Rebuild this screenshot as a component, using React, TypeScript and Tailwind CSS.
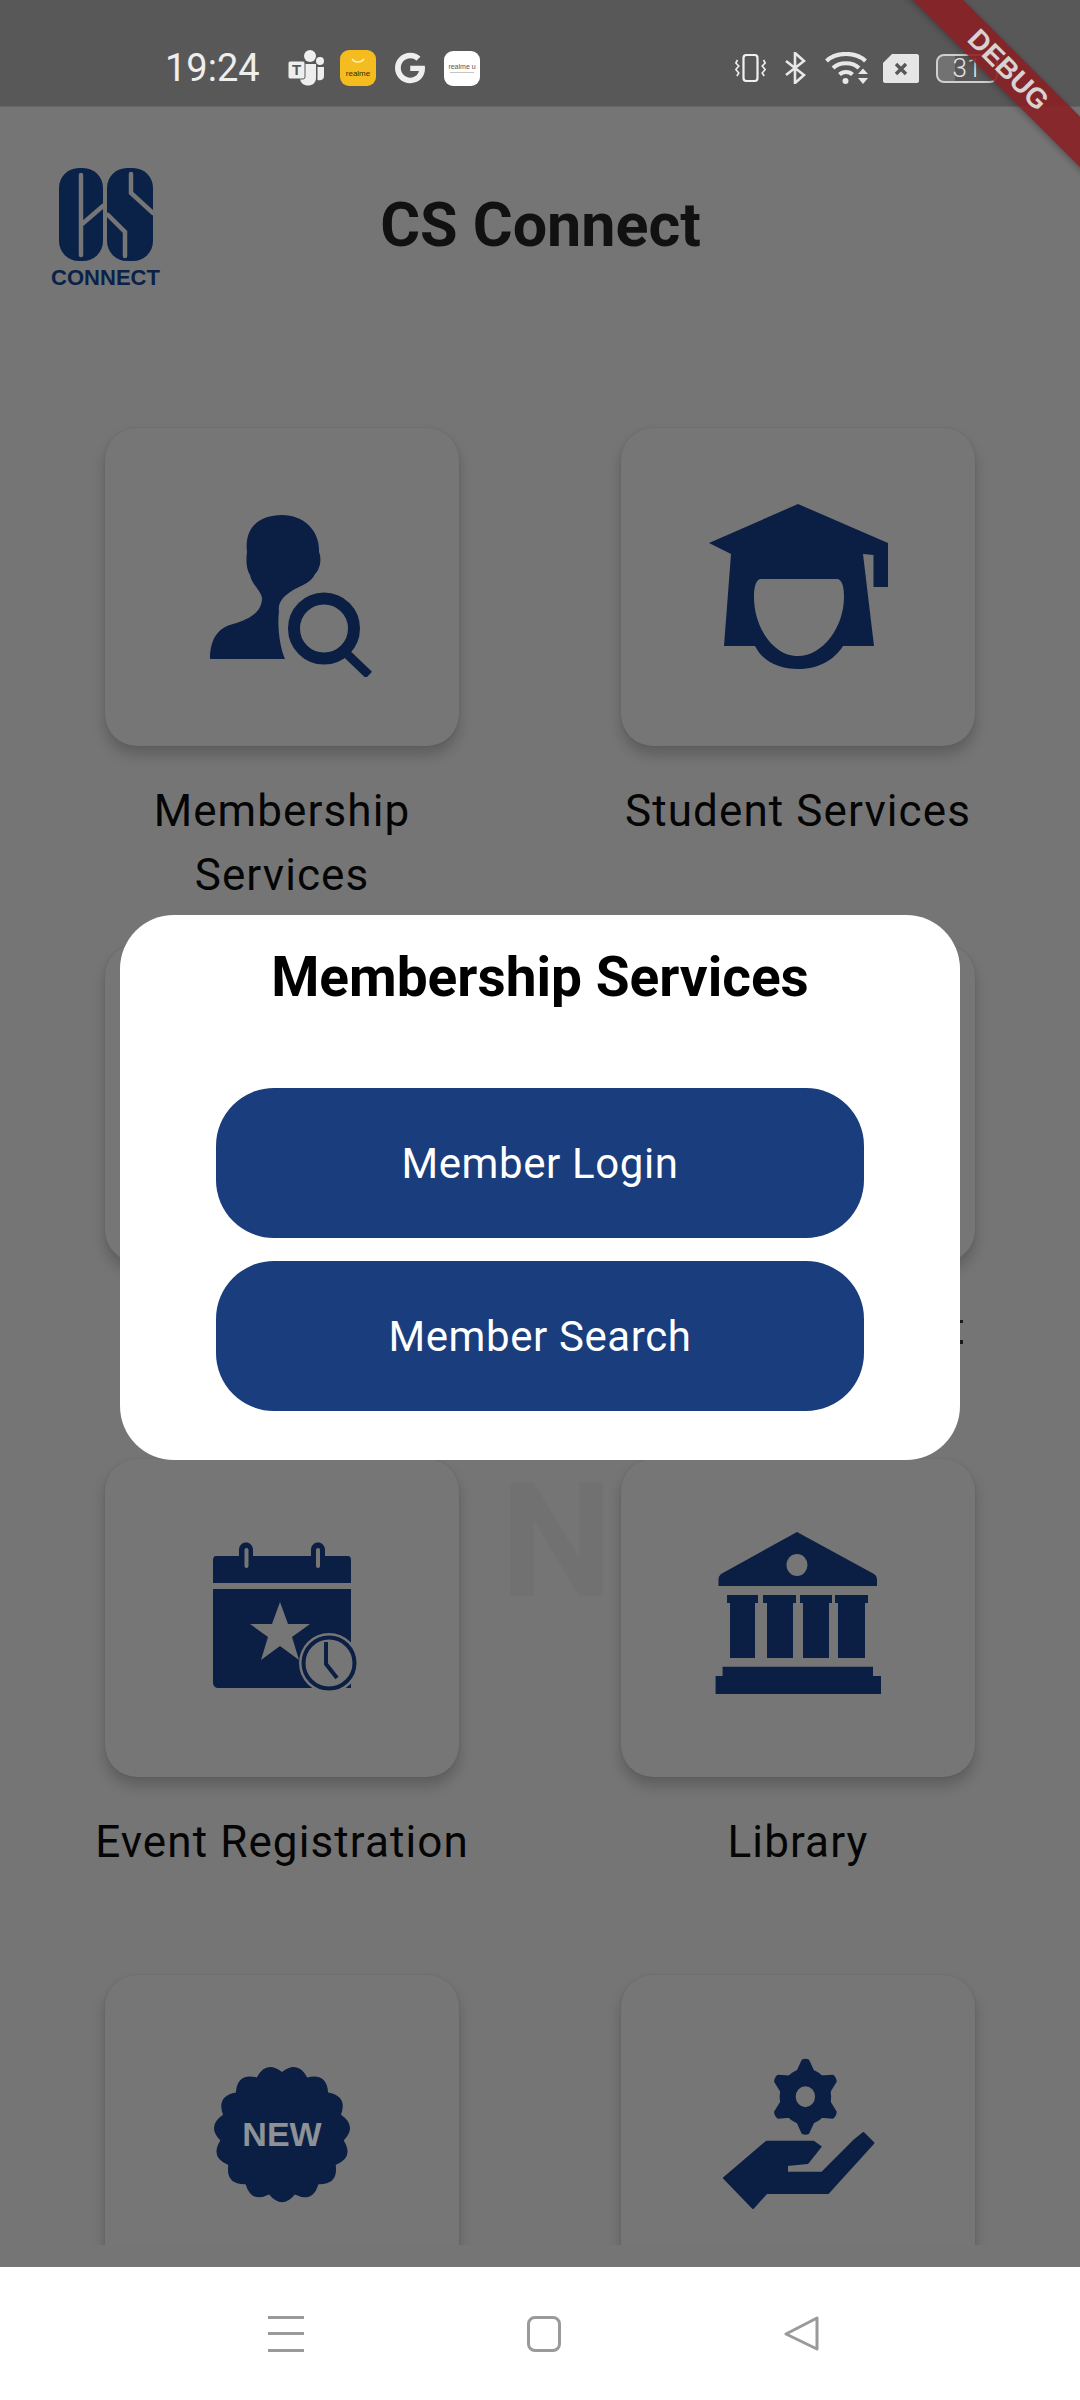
import { FaGoogle } from 'react-icons/fa';
import type { ReactNode } from 'react';

const navy = '#0b1f44';
const dim = '#767676';

// 15 rounded lobes, a notch on top and a lobe at the bottom
const badgePath = (() => {
  const at = (r: number, step: number) => {
    const angle = (Math.PI * 2 * step) / 15 - Math.PI / 2;
    return `${(90 + r * Math.cos(angle)).toFixed(1)} ${(90 + r * Math.sin(angle)).toFixed(1)}`;
  };
  let d = `M${at(62, 0)}`;
  for (let i = 0; i < 15; i++) {
    d += `Q${at(76, i + 0.5)} ${at(62, i + 1)}`;
  }
  return `${d}Z`;
})();

function PersonSearchIcon() {
  return (
    <svg viewBox="0 0 180 180" className="h-[180px] w-[180px]">
      <path
        fill={navy}
        d="M18 162C18 140 28 130 41 127C58 122 70 115 70 101C68 92 60 88 58 78C54 72 54 62 55 55C52 30 68 18 90 18C112 18 128 34 127 55C130 62 128 72 123 77C120 84 112 88 105 91C95 96 85 104 87 114C85 130 88 150 93 162Z"
      />
      <ellipse cx="132" cy="131.5" rx="30" ry="30" fill="none" stroke={navy} strokeWidth="12" />
      <path d="M154 156L177 178" stroke={navy} strokeWidth="9" />
    </svg>
  );
}

function StudentIcon() {
  return (
    <svg viewBox="0 0 180 180" className="h-[180px] w-[180px]">
      <path
        fill={navy}
        fillRule="evenodd"
        d="M90 7L180 46V90H165.5V58L155 57L166 149H135C125 165 108 172 90 172C72 172 55 165 47 149H16L23 57L1 46ZM52 82C47 84 46 92 46 100C46 130 65 159 90 159C115 159 136 130 136 100C136 92 135 84 130 82Z"
      />
    </svg>
  );
}

function EventIcon() {
  return (
    <svg viewBox="0 0 180 180" className="h-[180px] w-[180px]">
      <path fill={navy} d="M24 28H47V22C47 12 61 12 61 22V28H119V22C119 12 133 12 133 22V28H156C158 28 159 30 159 32V55H21V32C21 30 22 28 24 28Z" />
      <rect x="52.5" y="20" width="4" height="20" rx="2" fill={dim} />
      <rect x="124" y="20" width="4" height="20" rx="2" fill={dim} />
      <path fill={navy} d="M21 61H159V160H27C23 160 21 158 21 154Z" />
      <polygon
        fill={dim}
        points="88,74 96,96 118,96 100,109 107,132 88,118 69,132 76,109 58,96 80,96"
      />
      <circle cx="137" cy="135" r="30" fill={dim} />
      <circle cx="137" cy="135" r="25.5" fill={dim} stroke={navy} strokeWidth="4" />
      <path d="M134 114V136L145 150" fill="none" stroke={navy} strokeWidth="4" />
    </svg>
  );
}

function LibraryIcon() {
  return (
    <svg viewBox="0 0 180 180" className="h-[180px] w-[180px]">
      <path fill={navy} d="M89 4L166 46Q169 48 169 52V58H10.5V52Q10.5 48 13 46Z" />
      <ellipse cx="89" cy="37" rx="10.5" ry="11" fill={dim} />
      <path fill={navy} d="M19 67H50V75H47V130H22V75H19Z" />
      <path fill={navy} d="M55 67H88V75H85V130H59V75H55Z" />
      <path fill={navy} d="M92 67H124V75H121V130H95V75H92Z" />
      <path fill={navy} d="M127 67H160V75H157V130H130V75H127Z" />
      <path fill={navy} d="M14.6 138.7H165V148H173V166H7.6V148H14.6Z" />
    </svg>
  );
}

function NewBadgeIcon() {
  return (
    <svg viewBox="0 0 180 180" className="h-[180px] w-[180px]">
      <path d={badgePath} fill={navy} />
      <text
        x="90"
        y="102"
        textAnchor="middle"
        fill="#8d9296"
        fontFamily="Liberation Sans, sans-serif"
        fontSize="34"
        fontWeight="700"
      >
        NEW
      </text>
    </svg>
  );
}

function ServiceIcon() {
  return (
    <svg viewBox="0 0 180 180" className="h-[180px] w-[180px]">
      <g transform="translate(97.4 52.7) scale(0.92 1)" fill={navy}>
        <circle r="28" />
        {[0, 60, 120, 180, 240, 300].map((deg) => (
          <path key={deg} transform={`rotate(${deg})`} d="M-10 -25L-4 -37Q0 -39 4 -37L10 -25Z" />
        ))}
        <circle r="10.5" fill={dim} />
      </g>
      <path
        fill={navy}
        stroke={navy}
        strokeWidth="2"
        strokeLinejoin="round"
        d="M16 134L58.6 97.7H105.6L112.6 102.7L99.7 119L79 121V128.7H114L146.7 96L155.4 89L165.4 99L120 149H58.6L45 164Z"
      />
    </svg>
  );
}

function Logo() {
  return (
    <div className="flex w-[105px] flex-col items-center">
      <svg viewBox="0 0 94 93" className="h-[93px] w-[94px]">
        <rect x="0" y="0" width="44" height="93" rx="20" fill="#0a2248" />
        <rect x="48" y="0" width="46" height="93" rx="20" fill="#0a2248" />
        <path
          d="M22 7V87M22 57L44 38M72 6V25L94 45M66 88V64L49 47"
          fill="none"
          stroke={dim}
          strokeWidth="4.5"
          strokeLinecap="round"
        />
      </svg>
      <span className="mt-[7px] font-['Liberation_Sans',sans-serif] text-[22px] leading-[20px] font-bold whitespace-nowrap text-[#0a2248]">
        CONNECT
      </span>
    </div>
  );
}

function StatusBar() {
  return (
    <div className="flex h-[107px] shrink-0 items-center justify-between border-b border-[#656565] bg-[#585858] pt-[30px] pr-[82px] pl-[165px] text-[#eeeeee]">
      <div className="flex items-center">
        <span className="w-[93px] text-[38px] leading-none font-normal whitespace-nowrap">19:24</span>
        <svg viewBox="0 0 36 36" className="ml-[30px] h-[36px] w-[36px]">
          <circle cx="22" cy="6" r="6" fill="#eeeeee" />
          <circle cx="32" cy="11" r="4" fill="#eeeeee" />
          <path fill="#eeeeee" d="M12 14H28V28C28 38 12 38 12 28Z" />
          <path fill="#eeeeee" d="M29.5 17H36V26C36 30 32 31 29.5 30Z" />
          <rect x="0" y="11" width="17" height="18" rx="2" fill="#eeeeee" stroke="#585858" strokeWidth="1" />
          <text x="8.5" y="25" textAnchor="middle" fontSize="15" fontWeight="700" fill="#585858" fontFamily="Liberation Sans, sans-serif">
            T
          </text>
        </svg>
        <div className="ml-[16px] flex h-[36px] w-[36px] flex-col items-center rounded-[9px] bg-[#f4bc1f] pt-[8px]">
          <svg viewBox="0 0 16 6" className="h-[6px] w-[16px]">
            <path d="M2 1C5 5 11 5 14 1" fill="none" stroke="#fff2c0" strokeWidth="1.4" />
          </svg>
          <span className="mt-[6px] font-['Liberation_Sans',sans-serif] text-[8px] leading-[8px] text-[#3a2c00]">realme</span>
        </div>
        <FaGoogle className="ml-[19px] h-[32px] w-[30px] text-[#eeeeee]" />
        <div className="ml-[19px] flex h-[35px] w-[36px] flex-col items-center justify-center rounded-[9px] bg-white">
          <span className="font-['Liberation_Sans',sans-serif] text-[7px] leading-[8px] text-[#555555]">realme u</span>
          <span className="mt-[1px] h-[1px] w-[24px] bg-[#c4c4c4]" />
        </div>
      </div>
      <div className="flex items-center">
        <svg viewBox="0 0 31 28" className="h-[28px] w-[31px]" fill="none" stroke="#f0f0f0">
          <rect x="8.5" y="1" width="14" height="26" rx="3" strokeWidth="2.2" />
          <path d="M2.5 6L0.8 9L3.8 12L0.8 15.5L3.8 19L1.8 22" strokeWidth="1.6" />
          <path d="M28.5 6L30.2 9L27.2 12L30.2 15.5L27.2 19L29.2 22" strokeWidth="1.6" />
        </svg>
        <svg viewBox="0 0 21 32" className="ml-[19px] h-[32px] w-[21px]" fill="none" stroke="#e8e8e8" strokeWidth="2.6">
          <path d="M1 9L19 23L10 31V1L19 9L1 23" />
        </svg>
        <svg viewBox="0 0 44 33" className="ml-[19px] h-[33px] w-[44px]" fill="none" stroke="#e8e8e8" strokeWidth="4">
          <path d="M1.5 9C11 -0.5 31 -0.5 40.5 9" />
          <path d="M8 16C14.5 9.5 27.5 9.5 34 16" />
          <path d="M14.5 22.5C18 19 24 19 27.5 22.5" />
          <circle cx="20.5" cy="29" r="3" fill="#e8e8e8" stroke="none" />
          <path d="M33 22H43L38 16.5Z" fill="#e8e8e8" stroke="none" />
          <path d="M33 26H43L38 32Z" fill="#e8e8e8" stroke="none" />
        </svg>
        <svg viewBox="0 0 36 29" className="ml-[14px] h-[29px] w-[36px]">
          <path fill="#e6e6e6" d="M9 0H34C35 0 36 1 36 2V27C36 28 35 29 34 29H2C1 29 0 28 0 27V9Z" />
          <path d="M13 10L23 20M23 10L13 20" stroke="#585858" strokeWidth="3.4" />
        </svg>
        <div className="ml-[17px] flex h-[29px] w-[62px] items-center justify-center overflow-hidden rounded-[8px] border-2 border-[#cfcfcf] bg-[linear-gradient(to_right,#727272_30%,transparent_30%)] text-[26px] leading-none font-light text-[#e4e4e4]">
          31
        </div>
      </div>
    </div>
  );
}

function DebugBanner() {
  return (
    <div className="pointer-events-none absolute top-0 right-0 h-[200px] w-[200px] overflow-hidden">
      <div className="absolute top-[52px] left-[-32px] flex h-[36px] w-[320px] rotate-45 items-center justify-center bg-[#8a2026]/90 shadow-[0_2px_6px_rgba(0,0,0,0.25)]">
        <span className="font-['Liberation_Sans',sans-serif] text-[28px] leading-none font-bold text-[#d8d2d2]">DEBUG</span>
      </div>
    </div>
  );
}

function Tile({ icon, label }: { icon?: ReactNode; label?: string }) {
  return (
    <div className="flex flex-col items-center">
      <div className="flex h-[318px] w-[354px] shrink-0 items-center justify-center rounded-[32px] bg-[#767676] shadow-[0_9px_14px_rgba(0,0,0,0.2),0_0_3px_rgba(0,0,0,0.08)]">
        {icon}
      </div>
      {label ? (
        <p className="mt-[33px] w-[384px] text-center text-[44px] leading-[64px] tracking-[1.1px] text-[#050505]">{label}</p>
      ) : null}
    </div>
  );
}

function MembershipDialog() {
  return (
    <div className="absolute top-[808px] left-[120px] flex h-[545px] w-[840px] flex-col items-center rounded-[54px] bg-white pt-[32px]">
      <h2 className="text-[55px] leading-[60px] font-bold whitespace-nowrap text-black">Membership Services</h2>
      <div className="mt-[81px] flex flex-col gap-[23px]">
        <button className="h-[150px] w-[648px] rounded-[58px] bg-[#193d7d] text-[42px] tracking-[0.6px] text-white">Member Login</button>
        <button className="h-[150px] w-[648px] rounded-[58px] bg-[#193d7d] text-[42px] tracking-[0.6px] text-white">Member Search</button>
      </div>
      {/* last glyph of the row 2 label, the rest is behind the dialog */}
      <div className="absolute top-[405px] left-full flex flex-col gap-[17px]">
        <span className="h-[3px] w-[3px] bg-[#1a1a1a]" />
        <span className="h-[4px] w-[3px] bg-[#1a1a1a]" />
      </div>
    </div>
  );
}

export default function App() {
  return (
    <div className="relative flex h-[2400px] w-[1080px] flex-col overflow-hidden bg-white font-[Roboto,sans-serif]">
      <StatusBar />
      <main className="relative flex-1 overflow-hidden bg-[#757575]">
        <span className="absolute top-[1355px] left-[500px] text-[160px] leading-none font-bold text-[#717171]">N</span>
        <header className="relative grid grid-cols-[1fr_auto_1fr] items-start pt-[61px] pl-[53px]">
          <Logo />
          <h1 className="mt-[24px] -translate-x-[26px] text-[61px] leading-[66px] font-bold whitespace-nowrap text-[#111111]">CS Connect</h1>
          <span />
        </header>
        <div className="relative mt-[140px] grid grid-cols-[516px_516px] auto-rows-[515.5px] justify-center">
          <Tile icon={<PersonSearchIcon />} label="Membership Services" />
          <Tile icon={<StudentIcon />} label="Student Services" />
          <Tile />
          <Tile />
          <Tile icon={<EventIcon />} label="Event Registration" />
          <Tile icon={<LibraryIcon />} label="Library" />
          <Tile icon={<NewBadgeIcon />} />
          <Tile icon={<ServiceIcon />} />
        </div>
        <div className="absolute right-0 bottom-0 left-0 h-[22px] bg-[#757575]" />
        <MembershipDialog />
      </main>
      <nav className="flex h-[133px] shrink-0 items-center justify-center gap-[223px] bg-white pl-[7px]">
        <div className="flex h-[36px] w-[36px] flex-col justify-between">
          <span className="h-[3px] bg-[#9a9a9a]" />
          <span className="h-[3px] bg-[#9a9a9a]" />
          <span className="h-[3px] bg-[#9a9a9a]" />
        </div>
        <div className="h-[36px] w-[34px] rounded-[8px] border-[3px] border-[#9a9a9a]" />
        <svg viewBox="0 0 35 35" className="h-[35px] w-[35px]" fill="none" stroke="#9a9a9a" strokeWidth="3" strokeLinejoin="round">
          <path d="M33 2V33L2 18Z" />
        </svg>
      </nav>
      <DebugBanner />
    </div>
  );
}
